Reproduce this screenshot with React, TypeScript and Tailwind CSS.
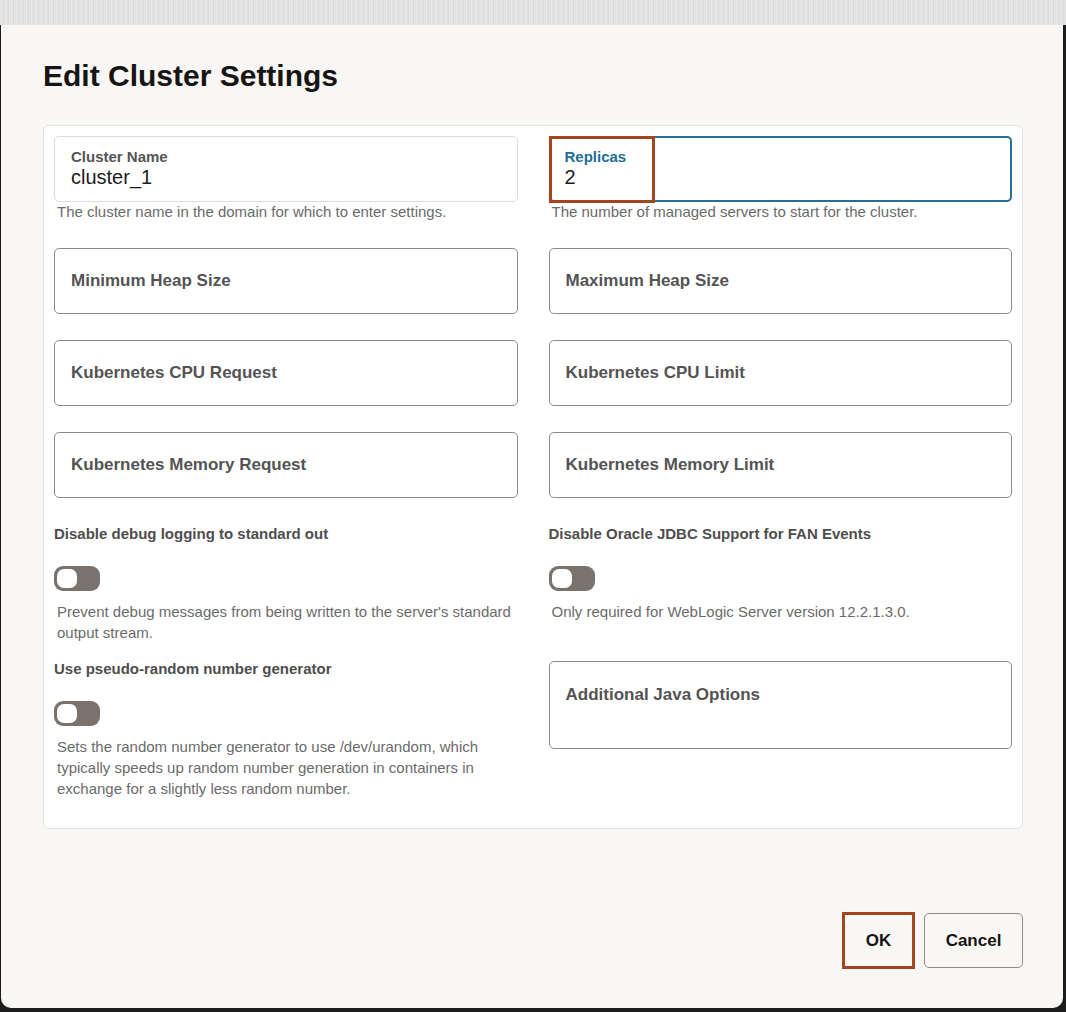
import React from "react";

const F = { fontFamily: '"Liberation Sans", Arial, sans-serif' };

function Field({ label, tall }: { label: string; tall?: boolean }) {
  return (
    <div
      className={
        "rounded-[5px] border border-[#8e8b88] bg-white px-[16px] " +
        (tall ? "h-[88px] pt-[21px]" : "h-[66px] flex items-center")
      }
    >
      <span className="text-[17px] font-bold text-[#545454] leading-[20px]">{label}</span>
    </div>
  );
}

function Toggle() {
  return (
    <div className="w-[46px] h-[25px] rounded-[9px] bg-[#7a736d] p-[3px]">
      <div className="w-[20px] h-[19px] rounded-[7px] bg-white" />
    </div>
  );
}

function ToggleGroup({ label, help }: { label: string; help: React.ReactNode }) {
  return (
    <div className="flex flex-col">
      <div className="text-[15px] font-bold text-[#4e4e4e] leading-[20px]">{label}</div>
      <div className="mt-[22px]">
        <Toggle />
      </div>
      <div className="mt-[10px] pl-[3px] text-[15px] leading-[21px] text-[#6b6b6b]">{help}</div>
    </div>
  );
}

export default function App() {
  return (
    <div className="w-[1066px] h-[1012px] bg-[#1d1d1d] flex flex-col overflow-hidden" style={F}>
      <div className="h-[25px] w-full bg-[repeating-linear-gradient(90deg,#dedede_0px,#ececec_2px,#d7d7d7_3px,#e9e9e9_5px)]" />
      <div className="flex-1 ml-[1px] mr-[3px] mb-[4px] bg-[#f9f7f5] rounded-b-[10px] flex flex-col pl-[42px] pr-[40px]">
        <h1 className="mt-[33px] text-[30px] leading-[36px] font-bold text-[#161513]">Edit Cluster Settings</h1>
        <div className="mt-[31px] rounded-[6px] border border-[#e4e2df] bg-white p-[10px] pb-[29px]">
          <div className="grid grid-cols-2 gap-x-[31px] gap-y-[26px]">
            <div className="flex flex-col">
              <div className="h-[66px] rounded-[5px] border border-[#dedcd9] bg-white px-[16px] pt-[11px]">
                <div className="text-[15px] leading-[17px] font-bold text-[#555]">Cluster Name</div>
                <div className="text-[20px] leading-[24px] text-[#1c1c1c]">cluster_1</div>
              </div>
              <div className="pl-[3px] text-[15px] leading-[20px] text-[#6b6b6b]">
                The cluster name in the domain for which to enter settings.
              </div>
            </div>
            <div className="flex flex-col">
              <div className="relative h-[66px] rounded-[5px] border-2 border-[#276f94] bg-white px-[14px] pt-[10px]">
                <div className="text-[15px] leading-[17px] font-bold text-[#1f6e93]">Replicas</div>
                <div className="text-[20px] leading-[24px] text-[#1c1c1c]">2</div>
                <div className="absolute left-[-2px] top-[-2px] w-[106px] h-[67px] border-[3px] border-[#a3461e]" />
              </div>
              <div className="pl-[3px] text-[15px] leading-[20px] text-[#6b6b6b]">
                The number of managed servers to start for the cluster.
              </div>
            </div>
            <Field label="Minimum Heap Size" />
            <Field label="Maximum Heap Size" />
            <Field label="Kubernetes CPU Request" />
            <Field label="Kubernetes CPU Limit" />
            <Field label="Kubernetes Memory Request" />
            <Field label="Kubernetes Memory Limit" />
            <div className="flex flex-col gap-[16px]">
              <ToggleGroup
                label="Disable debug logging to standard out"
                help="Prevent debug messages from being written to the server's standard output stream."
              />
              <ToggleGroup
                label="Use pseudo-random number generator"
                help="Sets the random number generator to use /dev/urandom, which typically speeds up random number generation in containers in exchange for a slightly less random number."
              />
            </div>
            <div className="flex flex-col">
              <ToggleGroup
                label="Disable Oracle JDBC Support for FAN Events"
                help="Only required for WebLogic Server version 12.2.1.3.0."
              />
              <div className="mt-[39px]">
                <Field label="Additional Java Options" tall />
              </div>
            </div>
          </div>
        </div>
        <div className="flex-1" />
        <div className="flex justify-end items-center mb-[39px]">
          <button className="w-[73px] h-[57px] border-[3px] border-[#a3461e] bg-[#f9f7f5] text-[17px] font-bold text-[#161513]">
            OK
          </button>
          <button className="ml-[9px] w-[99px] h-[55px] rounded-[5px] border border-[#8e8b88] bg-[#f9f7f5] text-[17px] font-bold text-[#161513]">
            Cancel
          </button>
        </div>
      </div>
    </div>
  );
}
